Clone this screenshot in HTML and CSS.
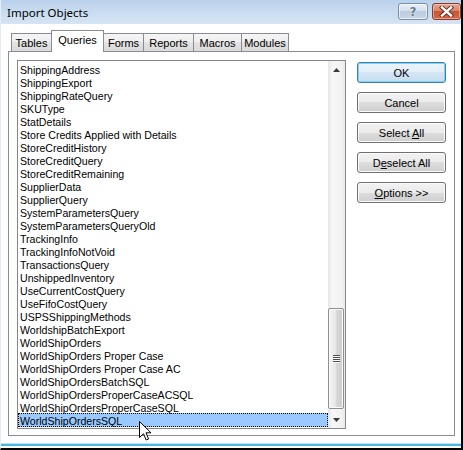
FILE: index.html
```html
<!DOCTYPE html>
<html>
<head>
<meta charset="utf-8">
<link rel="stylesheet" href="styles.css">
</head>
<body>
<div class="window">
  <div class="titlebar">
    <span class="title">Import Objects</span>
    <div class="caption-btns">
      <div class="cbtn help"><span>?</span></div>
      <div class="cbtn close">
        <svg width="15" height="11" viewBox="0 0 15 11">
          <path d="M3 1.5 L12 9.5 M12 1.5 L3 9.5" stroke="#5a2a20" stroke-width="4.2" stroke-linecap="square"/>
          <path d="M3 1.5 L12 9.5 M12 1.5 L3 9.5" stroke="#ffffff" stroke-width="2.4" stroke-linecap="square"/>
        </svg>
      </div>
    </div>
  </div>
  <div class="client">
    <div class="tabs">
      <div class="tab tab-tables">Tables</div>
      <div class="tab tab-queries active">Queries</div>
      <div class="tab tab-forms">Forms</div>
      <div class="tab tab-reports">Reports</div>
      <div class="tab tab-macros">Macros</div>
      <div class="tab tab-modules">Modules</div>
    </div>
    <div class="panel">
      <div class="listbox">
        <ul class="items">
          <li>ShippingAddress</li>
          <li>ShippingExport</li>
          <li>ShippingRateQuery</li>
          <li>SKUType</li>
          <li>StatDetails</li>
          <li>Store Credits Applied with Details</li>
          <li>StoreCreditHistory</li>
          <li>StoreCreditQuery</li>
          <li>StoreCreditRemaining</li>
          <li>SupplierData</li>
          <li>SupplierQuery</li>
          <li>SystemParametersQuery</li>
          <li>SystemParametersQueryOld</li>
          <li>TrackingInfo</li>
          <li>TrackingInfoNotVoid</li>
          <li>TransactionsQuery</li>
          <li>UnshippedInventory</li>
          <li>UseCurrentCostQuery</li>
          <li>UseFifoCostQuery</li>
          <li>USPSShippingMethods</li>
          <li>WorldshipBatchExport</li>
          <li>WorldShipOrders</li>
          <li>WorldShipOrders Proper Case</li>
          <li>WorldShipOrders Proper Case AC</li>
          <li>WorldShipOrdersBatchSQL</li>
          <li>WorldShipOrdersProperCaseACSQL</li>
          <li>WorldShipOrdersProperCaseSQL</li>
          <li class="selected">WorldShipOrdersSQL</li>
        </ul>
        <div class="scrollbar">
          <div class="sb-arrow">
            <svg width="7" height="4" viewBox="0 0 7 4"><path d="M3.5 0 L7 4 L0 4 Z" fill="#3a3a3a"/></svg>
          </div>
          <div class="sb-track">
            <div class="sb-thumb">
              <div class="grip"><i></i><i></i><i></i><i></i></div>
            </div>
          </div>
          <div class="sb-arrow">
            <svg width="7" height="4" viewBox="0 0 7 4"><path d="M0 0 L7 0 L3.5 4 Z" fill="#3a3a3a"/></svg>
          </div>
        </div>
      </div>
      <div class="buttons">
        <div class="btn default">OK</div>
        <div class="btn">Cancel</div>
        <div class="btn">Select <u>A</u>ll</div>
        <div class="btn">D<u>e</u>select All</div>
        <div class="btn"><u>O</u>ptions &gt;&gt;</div>
      </div>
    </div>
  </div>
  <div class="frame-bottom"></div>
  <svg class="cursor" width="13" height="20" viewBox="0 0 13 20">
    <path d="M0.5 0.5 L0.5 16.5 L4.5 12.8 L7.2 19 L9.6 18 L7 11.8 L12 11.8 Z" fill="#ffffff" stroke="#000000" stroke-width="1" stroke-linejoin="miter"/>
  </svg>
</div>
</body>
</html>
```
FILE: styles.css
```css
* { box-sizing: border-box; }
html, body { margin: 0; padding: 0; }
body {
  width: 463px;
  height: 450px;
  overflow: hidden;
  background: #ffffff;
  font-family: "Liberation Sans", Arial, sans-serif;
  font-size: 11px;
  color: #000;
}
.window {
  position: relative;
  width: 463px;
  height: 450px;
  background: #ffffff;
  border-right: 2px solid #000;
  border-bottom: 2px solid #000;
  border-left: 1px solid #e4edf7;
  overflow: hidden;
}
.titlebar {
  height: 24px;
  display: flex;
  align-items: flex-start;
  justify-content: space-between;
  padding-left: 6px;
  background: linear-gradient(#b9d1ea, #c9dcf0 50%, #d6e4f3);
}
.title {
  font-family: "Noto Sans", "Open Sans", sans-serif;
  font-size: 11.5px;
  line-height: 25px;
  color: #000;
}
.caption-btns {
  display: flex;
  gap: 4px;
  padding-top: 3px;
}
.cbtn {
  height: 17px;
  border-radius: 3px;
  display: flex;
  align-items: center;
  justify-content: center;
}
.help {
  width: 30px;
  border: 1px solid #7c8fa8;
  background: linear-gradient(#e9f0f8, #d5e0ed 45%, #bccbdf 50%, #c9d6e7);
  box-shadow: inset 0 0 0 1px rgba(255,255,255,0.6);
}
.help span {
  font-family: "DejaVu Sans", sans-serif;
  font-weight: bold;
  font-size: 12px;
  line-height: 12px;
  color: #6a7a90;
  text-shadow: 0 0 1px #fff, 0 0 1px #fff;
}
.close {
  width: 29px;
  border: 1px solid #8b3b28;
  background: linear-gradient(#e6a591, #d7866c 45%, #c75535 50%, #d2694a);
  box-shadow: inset 0 0 0 1px rgba(255,220,210,0.5);
}
.client {
  padding: 7px 0 0 7px;
}
.tabs {
  display: flex;
  align-items: flex-end;
  height: 20px;
  padding-left: 3px;
}
.tab {
  height: 18px;
  margin-left: -1px;
  border: 1px solid #898c95;
  border-bottom: none;
  background: linear-gradient(#f5f5f5, #eeeeee 50%, #e3e3e3 50%, #dadada);
  text-align: center;
  line-height: 18px;
  font-size: 11px;
  color: #000;
}
.tab:first-child { margin-left: 0; }
.tab.active {
  position: relative;
  z-index: 1;
  height: 22px;
  margin-bottom: -1px;
  background: #ffffff;
  line-height: 18px;
}
.tab-tables { width: 41px; }
.tab-queries { width: 53px; }
.tab-forms { width: 41px; }
.tab-reports { width: 51px; }
.tab-macros { width: 49px; }
.tab-modules { width: 48px; }
.panel {
  width: 447px;
  height: 385px;
  border: 1px solid #898c95;
  padding: 8px 0 0 8px;
  display: flex;
  align-items: flex-start;
  background: #ffffff;
}
.listbox {
  width: 329px;
  height: 369px;
  border: 1px solid #828790;
  display: flex;
  background: #ffffff;
}
.items {
  flex: 1;
  list-style: none;
  margin: 0;
  padding: 1px 0 0 0;
  overflow: hidden;
}
.items li {
  height: 13px;
  line-height: 16px;
  padding-left: 2px;
  font-size: 10.6px;
  white-space: nowrap;
}
.items li.selected {
  background: #99c9ff;
  outline: 1px dotted #000;
  outline-offset: -1px;
  height: 14px;
}
.scrollbar {
  width: 17px;
  display: flex;
  flex-direction: column;
  background: linear-gradient(to right, #e6e6e6, #f6f6f6 25%, #f2f2f2 80%, #e9e9e9);
}
.sb-arrow {
  height: 17px;
  display: flex;
  align-items: center;
  justify-content: center;
}
.sb-track {
  flex: 1;
  display: flex;
  flex-direction: column;
  justify-content: flex-end;
  padding-bottom: 2px;
}
.sb-thumb {
  width: 16px;
  height: 101px;
  border: 1px solid #8f8f8f;
  border-radius: 2px;
  background: linear-gradient(to right, #f4f4f4, #e8e8e8 45%, #d6d6d6 55%, #cfcfcf);
  box-shadow: inset 0 0 0 1px #fbfbfb;
  display: flex;
  align-items: center;
  justify-content: center;
}
.grip {
  display: flex;
  flex-direction: column;
  gap: 1px;
}
.grip i {
  display: block;
  width: 7px;
  height: 1px;
  background: #4c4c4c;
  box-shadow: 0 1px 0 #fafafa;
}
.buttons {
  display: flex;
  flex-direction: column;
  gap: 9px;
  margin-left: 11px;
  margin-top: 2px;
}
.btn {
  width: 89px;
  height: 21px;
  border: 1px solid #707070;
  border-radius: 3px;
  background: linear-gradient(#f2f2f2, #ebebeb 50%, #dddddd 50%, #cfcfcf);
  box-shadow: inset 0 0 0 1px #fbfbfb;
  text-align: center;
  line-height: 20px;
  font-size: 11px;
}
.btn u { text-decoration: underline; text-underline-offset: 1px; }
.btn.default {
  border-color: #3c7fb1;
  background: linear-gradient(#ebf4fb, #e3eef8 50%, #d4e6f5 50%, #c7ddf0);
  box-shadow: inset 0 0 0 1px #7fd4f5;
}
.frame-bottom {
  margin-top: 7px;
  height: 5px;
  background: linear-gradient(#b8e3f5 0, #b8e3f5 1px, #49b8e6 1px, #49b8e6 3px, #ffffff 3px);
}
.cursor {
  position: absolute;
  left: 138px;
  top: 421px;
}
```
